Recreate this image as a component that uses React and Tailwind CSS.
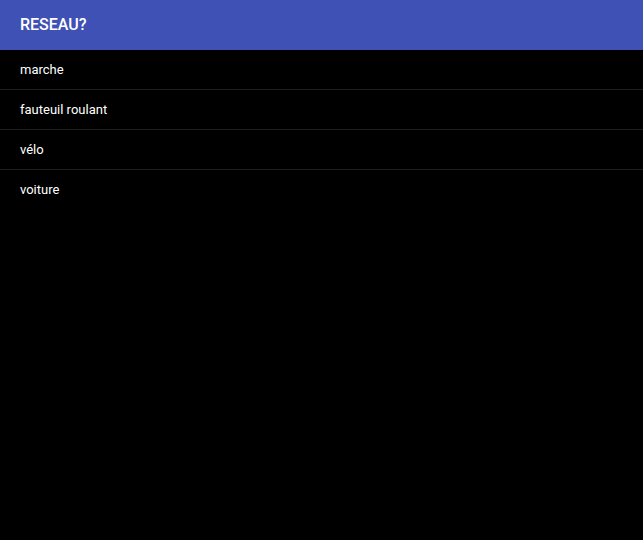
import React from 'react';

const items = ['marche', 'fauteuil roulant', 'vélo', 'voiture'];

const App = () => {
    return (
        <div className="w-full min-h-screen bg-black" style={{ fontFamily: 'Roboto, sans-serif' }}>
            <header className="h-[50px] bg-[#3f51b5] flex items-center px-5">
                <h1 className="text-white text-[16px] font-medium">RESEAU?</h1>
            </header>
            <ul>
                {items.map((item, i) => (
                    <li
                        key={item}
                        className={
                            i < items.length - 1
                                ? 'h-[40px] flex items-center px-5 text-white text-[13px] border-b border-[#1e1e1e]'
                                : 'h-[40px] flex items-center px-5 text-white text-[13px]'
                        }
                    >
                        {item}
                    </li>
                ))}
            </ul>
        </div>
    );
};

export default App;
